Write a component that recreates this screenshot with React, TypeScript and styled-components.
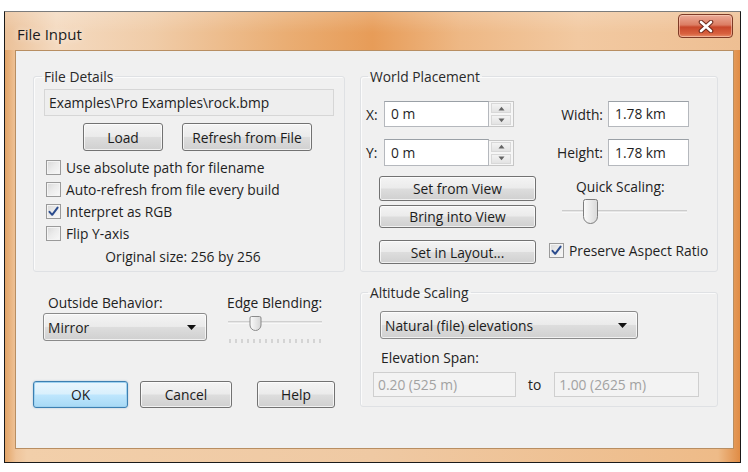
import React from "react";
import styled, { createGlobalStyle, css } from "styled-components";

const GlobalStyle = createGlobalStyle`
  html, body { margin: 0; padding: 0; background: #ffffff; }
  body {
    font-family: "Open Sans", "Noto Sans", "DejaVu Sans", sans-serif;
    font-size: 13.8px;
    color: #1f1f1f;
  }
  * { box-sizing: border-box; }
`;

const Page = styled.div`
  width: 748px;
  height: 472px;
  padding: 11px 0 0 4px;
`;

const Window = styled.div`
  width: 737px;
  height: 452px;
  border: 1px solid #1a1a1a;
  border-top-color: #7c7c7c;
  display: flex;
  flex-direction: column;
  padding: 0 6px 13px 10px;
  background: linear-gradient(90deg, #e3a568 0%, #efc49a 1.5%, #f2cfaa 3%, #efc9a3 50%, #eebb88 97%, #e08c45 100%);
`;

const TitleBar = styled.div`
  height: 38px;
  margin: 0 -6px 0 -10px;
  padding: 0 7px 0 12px;
  display: flex;
  justify-content: space-between;
  align-items: flex-start;
  background:
    linear-gradient(180deg, rgba(255, 255, 255, 0.18) 0%, rgba(255, 255, 255, 0) 55%),
    linear-gradient(90deg, #ebc199 0%, #f4dac0 7%, #f0cca8 20%, #eaae74 38%, #e79c58 50%, #eeb885 62%, #f2c9a1 78%, #eebf93 100%);
`;

const Title = styled.div`
  padding-top: 12px;
  font-size: 15px;
  line-height: 20px;
  color: #1b1b1b;
  text-shadow: 0 0 6px rgba(255, 255, 255, 0.8);
`;

const CloseButton = styled.div`
  margin-top: 2px;
  width: 55px;
  height: 24px;
  border: 1px solid #7e3a26;
  border-radius: 4px;
  display: flex;
  align-items: center;
  justify-content: center;
  background: linear-gradient(180deg, #ecab98 0%, #dc7d63 45%, #c8472b 55%, #d8613f 85%, #e88e6a 100%);
  box-shadow: inset 0 0 0 1px rgba(255, 220, 200, 0.5);
`;

const Client = styled.div`
  flex: 1;
  background: #f0f0f0;
  border: 1px solid #b88e62;
  display: grid;
  grid-template-columns: 312px 358px;
  column-gap: 15px;
  padding: 17px 0 0 17px;
  align-items: start;
`;

const Column = styled.div`
  display: flex;
  flex-direction: column;
`;

const Group = styled.fieldset<{ $h: number; $top?: number; $pl?: number }>`
  margin: ${(p) => p.$top ?? 0}px 0 0 0;
  height: ${(p) => p.$h}px;
  border: 1px solid #dfe1e4;
  border-radius: 3px;
  padding: 0 0 0 ${(p) => p.$pl ?? 0}px;
  min-width: 0;
  box-shadow: inset 1px 1px 0 #fbfbfb;
`;

const Legend = styled.legend<{ $ml: number }>`
  margin-left: ${(p) => p.$ml}px;
  padding: 0 2px;
  line-height: 17px;
  color: #2a2a2a;
`;

const PathField = styled.div`
  margin: 4px 0 0 10px;
  width: 290px;
  height: 27px;
  border: 1px solid #d6d6d6;
  background: #eeeeee;
  padding: 0 4px;
  line-height: 25px;
  color: #222;
`;

const Row = styled.div<{ $gap?: number; $top?: number; $left?: number }>`
  display: flex;
  align-items: center;
  gap: ${(p) => p.$gap ?? 0}px;
  margin-top: ${(p) => p.$top ?? 0}px;
  margin-left: ${(p) => p.$left ?? 0}px;
`;

const buttonFace = css`
  border: 1px solid #727272;
  border-radius: 3px;
  background: linear-gradient(180deg, #f4f4f4 0%, #ebebeb 48%, #dddddd 52%, #d0d0d0 100%);
  box-shadow: inset 0 0 0 1px rgba(255, 255, 255, 0.7);
`;

const Button = styled.div<{ $w: number; $h?: number; $default?: boolean; $ml?: number }>`
  ${buttonFace};
  width: ${(p) => p.$w}px;
  height: ${(p) => p.$h ?? 27}px;
  margin-left: ${(p) => p.$ml ?? 0}px;
  display: flex;
  align-items: center;
  justify-content: center;
  white-space: nowrap;
  color: #1c1c1c;
  ${(p) =>
    p.$default &&
    css`
      border-color: #3c7fb1;
      background: linear-gradient(180deg, #eaf6fd 0%, #d9f0fc 48%, #bee6fd 52%, #a7d9f5 100%);
      box-shadow: inset 0 0 0 1px #9fd2f0, 0 0 2px rgba(60, 127, 177, 0.4);
    `}
`;

const CheckRow = styled.div<{ $left?: number; $top?: number }>`
  display: flex;
  align-items: center;
  height: 22px;
  gap: 5px;
  margin-left: ${(p) => p.$left ?? 0}px;
  margin-top: ${(p) => p.$top ?? 0}px;
  white-space: nowrap;
`;

const Box = styled.span`
  width: 15px;
  height: 15px;
  border: 1px solid #9a9a9a;
  background: linear-gradient(135deg, #d8d8d8 0%, #ececec 50%, #f8f8f8 100%);
  box-shadow: inset 0 0 0 1px #f4f4f4;
  display: flex;
  align-items: center;
  justify-content: center;
  flex: none;
`;

const CenterText = styled.div`
  margin-top: 4px;
  text-align: center;
  line-height: 17px;
  padding-right: 12px;
`;

const Label = styled.div<{ $w?: number; $align?: string; $ml?: number; $mt?: number }>`
  ${(p) => (p.$w ? `width: ${p.$w}px;` : "")}
  text-align: ${(p) => p.$align ?? "left"};
  margin-left: ${(p) => p.$ml ?? 0}px;
  margin-top: ${(p) => p.$mt ?? 0}px;
  line-height: 17px;
  white-space: nowrap;
  color: #222;
`;

const TextField = styled.div<{ $w: number; $h?: number; $disabled?: boolean }>`
  width: ${(p) => p.$w}px;
  height: ${(p) => p.$h ?? 26}px;
  border: 1px solid #b5b8bd;
  border-top-color: #9aa0a6;
  background: #ffffff;
  padding: 0 6px;
  line-height: ${(p) => (p.$h ?? 26) - 2}px;
  color: #1f1f1f;
  white-space: nowrap;
  ${(p) =>
    p.$disabled &&
    css`
      border-color: #cfcfcf;
      background: #f3f3f3;
      color: #a2a2a2;
      padding: 0 4px;
    `}
`;

const Spinner = styled.div`
  width: 25px;
  height: 26px;
  display: flex;
  flex-direction: column;
  border: 1px solid #c6c6c6;
  border-left: none;
  background: #f6f6f6;
`;

const SpinHalf = styled.div`
  flex: 1;
  display: flex;
  align-items: center;
  justify-content: center;
  margin: 1px 2px;
  border: 1px solid #d8d8d8;
  background: linear-gradient(180deg, #f3f3f3, #e3e3e3);
`;

const WPGrid = styled.div`
  margin-top: 16px;
  display: grid;
  grid-template-columns: 18px 105px 25px 89px 81px;
  grid-template-rows: 26px 27px;
  row-gap: 12px;
  align-items: center;
`;

const WPLower = styled.div`
  margin: 10px 0 0 13px;
  display: grid;
  grid-template-columns: 157px 170px;
`;

const ButtonStack = styled.div`
  display: flex;
  flex-direction: column;
`;

const ScalePane = styled.div`
  display: flex;
  flex-direction: column;
  align-items: flex-start;
`;

const Combo = styled.div<{ $w: number; $ml?: number }>`
  ${buttonFace};
  width: ${(p) => p.$w}px;
  height: 28px;
  margin-left: ${(p) => p.$ml ?? 0}px;
  padding: 0 10px 0 4px;
  display: flex;
  align-items: center;
  justify-content: space-between;
  color: #1c1c1c;
  border-color: #8a8a8a;
`;

const BottomGrid = styled.div`
  margin: 22px 0 0 10px;
  display: grid;
  grid-template-columns: 164px 110px;
  column-gap: 20px;
`;

const Cell = styled.div`
  display: flex;
  flex-direction: column;
  align-items: flex-start;
`;

const CheckMark = () => (
  <svg width="13" height="13" viewBox="0 0 13 13">
    <path d="M2.5 6.8 L5.2 9.8 L10.6 2.6" fill="none" stroke="#2b4c8e" strokeWidth="2" strokeLinecap="round" strokeLinejoin="round" />
  </svg>
);

const Arrow = ({ up }: { up?: boolean }) => (
  <svg width="7" height="5" viewBox="0 0 7 5">
    <path d={up ? "M0.5 4.5 L3.5 0.8 L6.5 4.5 Z" : "M0.5 0.5 L3.5 4.2 L6.5 0.5 Z"} fill="#646464" />
  </svg>
);

const DropArrow = () => (
  <svg width="9" height="5" viewBox="0 0 9 5">
    <path d="M0 0 L9 0 L4.5 5 Z" fill="#111" />
  </svg>
);

const Check = ({ checked, label, left, top }: { checked?: boolean; label: string; left?: number; top?: number }) => (
  <CheckRow $left={left} $top={top}>
    <Box>{checked && <CheckMark />}</Box>
    <span>{label}</span>
  </CheckRow>
);

const QuickSlider = () => (
  <svg width="140" height="30" viewBox="0 0 140 30" style={{ marginLeft: 19, marginTop: 2 }}>
    <defs>
      <linearGradient id="qthumb" x1="0" y1="0" x2="1" y2="0">
        <stop offset="0" stopColor="#fbfbfb" />
        <stop offset="1" stopColor="#d9d9d9" />
      </linearGradient>
    </defs>
    <line x1="7" y1="14" x2="132" y2="14" stroke="#a9a9a9" strokeWidth="1" />
    <line x1="7" y1="15" x2="132" y2="15" stroke="#ffffff" strokeWidth="1" />
    <path d="M30.5 2.5 h10 a2 2 0 0 1 2 2 v15 a7 7 0 0 1 -14 0 v-15 a2 2 0 0 1 2 -2 z" fill="url(#qthumb)" stroke="#7d7d7d" />
  </svg>
);

const EdgeSlider = () => (
  <svg width="100" height="34" viewBox="0 0 100 34" style={{ marginLeft: -1, marginTop: 2, marginBottom: -6 }}>
    <defs>
      <linearGradient id="ethumb" x1="0" y1="0" x2="1" y2="0">
        <stop offset="0" stopColor="#fbfbfb" />
        <stop offset="1" stopColor="#d5d5d5" />
      </linearGradient>
    </defs>
    <line x1="2" y1="9" x2="96" y2="9" stroke="#b0b0b0" />
    <line x1="2" y1="10" x2="96" y2="10" stroke="#ffffff" />
    <path d="M25.5 3.5 h8 a1.5 1.5 0 0 1 1.5 1.5 v7 a5.5 5.5 0 0 1 -11 0 v-7 a1.5 1.5 0 0 1 1.5 -1.5 z" fill="url(#ethumb)" stroke="#8a8a8a" />
    {Array.from({ length: 16 }).map((_, i) => (
      <line key={i} x1={4 + i * 6} y1="26" x2={4 + i * 6} y2="30" stroke="#b8b8b8" />
    ))}
  </svg>
);

export default function App() {
  return (
    <>
      <GlobalStyle />
      <Page>
        <Window>
          <TitleBar>
            <Title>File Input</Title>
            <CloseButton>
              <svg width="16" height="13" viewBox="0 0 16 13">
                <path d="M3 2 L13 11 M13 2 L3 11" stroke="#6e2a1c" strokeWidth="4.6" strokeLinecap="round" />
                <path d="M3 2 L13 11 M13 2 L3 11" stroke="#ffffff" strokeWidth="2.6" strokeLinecap="round" />
              </svg>
            </CloseButton>
          </TitleBar>
          <Client>
            <Column>
              <Group $h={204}>
                <Legend $ml={8}>File Details</Legend>
                <PathField>Examples\Pro Examples\rock.bmp</PathField>
                <Row $gap={19} $top={7} $left={49}>
                  <Button $w={80} $h={28}>Load</Button>
                  <Button $w={130} $h={28}>Refresh from File</Button>
                </Row>
                <Column style={{ marginTop: 5 }}>
                  <Check left={12} label="Use absolute path for filename" />
                  <Check left={12} label="Auto-refresh from file every build" />
                  <Check left={12} checked label="Interpret as RGB" />
                  <Check left={12} label="Flip Y-axis" />
                </Column>
                <CenterText>Original size: 256 by 256</CenterText>
              </Group>
              <BottomGrid>
                <Cell>
                  <Label $ml={5}>Outside Behavior:</Label>
                  <Combo $w={164} style={{ marginTop: 2 }}>
                    <span>Mirror</span>
                    <DropArrow />
                  </Combo>
                </Cell>
                <Cell>
                  <Label>Edge Blending:</Label>
                  <EdgeSlider />
                </Cell>
              </BottomGrid>
              <Row $top={40}>
                <Button $w={95} $default>OK</Button>
                <Button $w={92} $ml={12}>Cancel</Button>
                <Button $w={78} $ml={25}>Help</Button>
              </Row>
            </Column>
            <Column>
              <Group $h={204} $pl={5}>
                <Legend $ml={2}>World Placement</Legend>
                <WPGrid>
                  <Label>X:</Label>
                  <TextField $w={105}>0 m</TextField>
                  <Spinner>
                    <SpinHalf><Arrow up /></SpinHalf>
                    <SpinHalf><Arrow /></SpinHalf>
                  </Spinner>
                  <Label $align="right">Width:</Label>
                  <TextField $w={81} style={{ marginLeft: 5 }}>1.78 km</TextField>
                  <Label>Y:</Label>
                  <TextField $w={105} $h={27}>0 m</TextField>
                  <Spinner>
                    <SpinHalf><Arrow up /></SpinHalf>
                    <SpinHalf><Arrow /></SpinHalf>
                  </Spinner>
                  <Label $align="right">Height:</Label>
                  <TextField $w={81} $h={27} style={{ marginLeft: 5 }}>1.78 km</TextField>
                </WPGrid>
                <WPLower>
                  <ButtonStack>
                    <Button $w={157} $h={25}>Set from View</Button>
                    <Button $w={157} $h={23} style={{ marginTop: 4 }}>Bring into View</Button>
                    <Button $w={157} $h={24} style={{ marginTop: 12 }}>Set in Layout...</Button>
                  </ButtonStack>
                  <ScalePane>
                    <Label $ml={40} $mt={2}>Quick Scaling:</Label>
                    <QuickSlider />
                    <Check left={13} top={12} checked label="Preserve Aspect Ratio" />
                  </ScalePane>
                </WPLower>
              </Group>
              <Group $h={123} $top={12} $pl={19}>
                <Legend $ml={-12}>Altitude Scaling</Legend>
                <Combo $w={258} style={{ marginTop: 10 }}>
                  <span>Natural (file) elevations</span>
                  <DropArrow />
                </Combo>
                <Label $ml={1} $mt={10}>Elevation Span:</Label>
                <Row $top={6} $left={-7}>
                  <TextField $w={143} $h={25} $disabled>0.20 (525 m)</TextField>
                  <Label $ml={12}>to</Label>
                  <TextField $w={145} $h={25} $disabled style={{ marginLeft: 13 }}>1.00 (2625 m)</TextField>
                </Row>
              </Group>
            </Column>
          </Client>
        </Window>
      </Page>
    </>
  );
}
